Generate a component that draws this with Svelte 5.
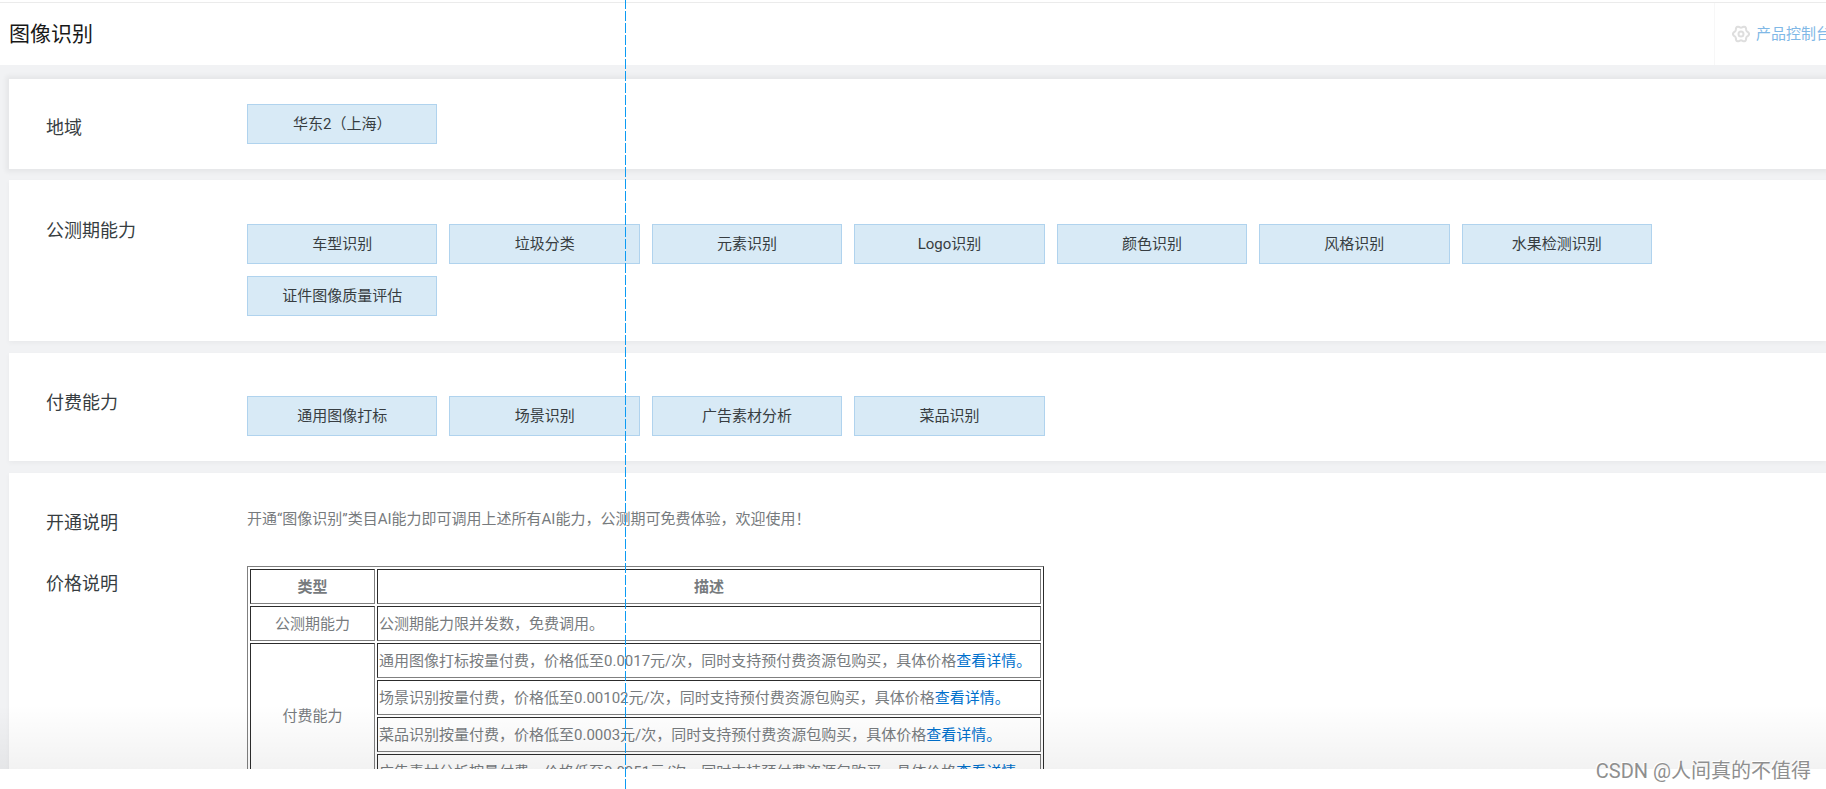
<script>
  const regions = ['华东2（上海）'];
  const betaAbilities = [
    '车型识别',
    '垃圾分类',
    '元素识别',
    'Logo识别',
    '颜色识别',
    '风格识别',
    '水果检测识别',
    '证件图像质量评估',
  ];
  const paidAbilities = ['通用图像打标', '场景识别', '广告素材分析', '菜品识别'];
  const prices = [
    { name: '通用图像打标', price: '0.0017' },
    { name: '场景识别', price: '0.00102' },
    { name: '菜品识别', price: '0.0003' },
    { name: '广告素材分析', price: '0.0051' },
  ];

  // Six-lobed gear outline around the centre of an 18-unit box.
  const gear = Array.from({ length: 72 }, (_, i) => {
    const angle = (i * Math.PI) / 36;
    const radius = 7.2 + 0.9 * Math.cos(6 * angle);
    return `${(9 + radius * Math.cos(angle)).toFixed(2)},${(9 + radius * Math.sin(angle)).toFixed(2)}`;
  }).join(' ');
</script>

{#snippet options(items)}
  <div class="options">
    {#each items as item}
      <button type="button">{item}</button>
    {/each}
  </div>
{/snippet}

<div class="page">
  <header>
    <h1>图像识别</h1>
    <div class="console">
      <svg viewBox="0 0 18 18" aria-hidden="true">
        <polygon points={gear} />
        <circle cx="9" cy="9" r="2.5" />
      </svg>
      <a href="#console">产品控制台</a>
    </div>
  </header>

  <main>
    <section class="card region">
      <h2>地域</h2>
      {@render options(regions)}
    </section>

    <section class="card">
      <h2>公测期能力</h2>
      {@render options(betaAbilities)}
    </section>

    <section class="card paid">
      <h2>付费能力</h2>
      {@render options(paidAbilities)}
    </section>

    <div class="card notes">
      <section>
        <h2>开通说明</h2>
        <p>开通“图像识别”类目AI能力即可调用上述所有AI能力，公测期可免费体验，欢迎使用！</p>
      </section>
      <section>
        <h2>价格说明</h2>
        <table>
          <thead>
            <tr><th class="kind">类型</th><th>描述</th></tr>
          </thead>
          <tbody>
            <tr><td class="kind">公测期能力</td><td>公测期能力限并发数，免费调用。</td></tr>
            {#each prices as row, i}
              <tr>
                {#if i === 0}
                  <td class="kind" rowspan={prices.length}>付费能力</td>
                {/if}
                <td>{row.name}按量付费，价格低至{row.price}元/次，同时支持预付费资源包购买，具体价格<a href="#price">查看详情。</a></td>
              </tr>
            {/each}
          </tbody>
        </table>
      </section>
    </div>
    <div class="fade"></div>
  </main>

  <div class="guide"></div>
  <span class="watermark">CSDN @人间真的不值得</span>
</div>

<style>
  :global(body) {
    background: #fff;
  }

  .page {
    position: relative;
    display: flex;
    flex-direction: column;
    box-sizing: border-box;
    height: 100vh;
    padding: 2px 0 20px;
    overflow: hidden;
    font-family: Roboto, 'Noto Sans CJK SC', sans-serif;
    font-size: 15px;
    line-height: 24px;
    color: #373d41;
  }

  header {
    display: flex;
    flex: none;
    align-items: center;
    justify-content: space-between;
    height: 62px;
    padding-left: 9px;
    border-top: 1px solid #ebebeb;
  }

  h1,
  h2,
  p {
    margin: 0;
    font-weight: 400;
  }

  h1 {
    font-size: 21px;
    line-height: 30px;
    color: #181818;
  }

  .console {
    display: flex;
    align-items: center;
    gap: 6px;
    box-sizing: border-box;
    width: 112px;
    height: 100%;
    padding-left: 17px;
    overflow: hidden;
    border-left: 1px solid #f7f7f7;
    white-space: nowrap;
  }

  .console svg {
    flex: none;
    width: 18px;
    height: 18px;
    fill: none;
    stroke: #dedede;
    stroke-width: 2;
  }

  a {
    color: #0070cc;
    text-decoration: none;
  }

  .console a {
    color: #80b8e6;
  }

  main {
    position: relative;
    display: flex;
    flex: 1;
    flex-direction: column;
    gap: 12px;
    min-height: 0;
    padding: 14px 0 0 9px;
    overflow: hidden;
    background: #f1f2f4;
  }

  .card {
    flex: none;
    padding: 44px 20px 25px 37px;
    background: #fff;
    box-shadow: 0 2px 5px rgba(0, 0, 0, 0.04);
  }

  section {
    display: grid;
    grid-template-columns: 201px minmax(0, 1fr);
  }

  .region {
    margin-bottom: -1px;
    padding-top: 25px;
    box-shadow: 0 0 5px 3px rgba(0, 0, 0, 0.05);
  }

  .paid {
    padding-top: 43px;
  }

  h2 {
    font-size: 18px;
    line-height: 26px;
  }

  .card > h2 {
    margin-top: -6px;
  }

  .region > h2 {
    margin-top: 11px;
  }

  .options {
    display: grid;
    grid-template-columns: repeat(auto-fill, minmax(190px, 1fr));
    gap: 12px;
    max-width: 1405px;
  }

  button {
    height: 40px;
    padding: 0 8px;
    border: 1px solid #b0d3ee;
    border-radius: 0;
    background: #d8eaf6;
    font: inherit;
    color: inherit;
  }

  .notes {
    display: grid;
    gap: 30px;
    padding-top: 32px;
  }

  .notes h2 {
    padding-top: 5px;
  }

  p {
    padding-top: 2px;
  }

  p,
  table {
    color: #777b7e;
  }

  table {
    width: 797px;
    max-width: 100%;
    border: 1px outset #808080;
    border-spacing: 2px;
  }

  th,
  td {
    height: 31px;
    padding: 1px;
    border: 1px inset #808080;
    text-align: left;
  }

  th {
    font-weight: 700;
    text-align: center;
  }

  .kind {
    width: 121px;
    text-align: center;
  }

  .fade {
    position: absolute;
    right: 0;
    bottom: 0;
    left: 0;
    height: 64px;
    background: linear-gradient(rgba(0, 0, 0, 0), rgba(0, 0, 0, 0.05));
    pointer-events: none;
  }

  .guide {
    position: absolute;
    top: 0;
    bottom: 0;
    left: 625px;
    width: 1px;
    background: repeating-linear-gradient(#0c9bf3 0 9px, transparent 9px 11px, #0c9bf3 11px 12px);
    pointer-events: none;
  }

  .watermark {
    position: absolute;
    right: 15px;
    bottom: 6px;
    font-size: 20px;
    color: #8f8f8f;
    text-shadow: -1px -1px 0 #fff;
  }
</style>
